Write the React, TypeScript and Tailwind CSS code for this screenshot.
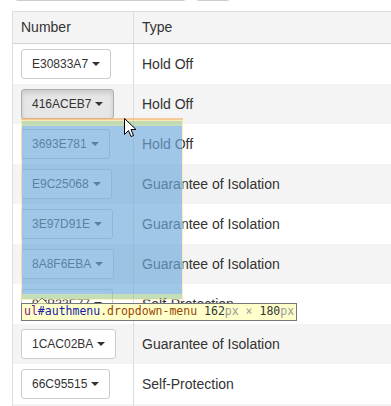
import React from "react";

type Row = { id: string; type: string; active?: boolean };

const rows: Row[] = [
  { id: "E30833A7", type: "Hold Off" },
  { id: "416ACEB7", type: "Hold Off", active: true },
  { id: "3693E781", type: "Hold Off" },
  { id: "E9C25068", type: "Guarantee of Isolation" },
  { id: "3E97D91E", type: "Guarantee of Isolation" },
  { id: "8A8F6EBA", type: "Guarantee of Isolation" },
  { id: "9CB33E77", type: "Self-Protection" },
  { id: "1CAC02BA", type: "Guarantee of Isolation" },
  { id: "66C95515", type: "Self-Protection" },
];

function IdButton({ id, active }: { id: string; active?: boolean }) {
  return (
    <button
      className={`inline-flex items-center h-[30px] pl-[10px] pr-[10px] rounded-[3px] border text-[12px] text-[#333] leading-[18px] ${
        active
          ? "bg-[#e6e6e6] border-[#adadad] shadow-[inset_0_3px_5px_rgba(0,0,0,0.125)]"
          : "bg-white border-[#ccc]"
      }`}
    >
      {id}
      <span className="ml-[4px] w-0 h-0 border-t-[4px] border-t-[#333] border-x-[4px] border-x-transparent" />
    </button>
  );
}

export default function App() {
  return (
    <div className="relative w-[391px] h-[406px] overflow-hidden bg-white font-['Liberation_Sans',Arial,sans-serif] text-[14px] text-[#333]">
      {/* bits of the toolbar scrolled off the top */}
      <div className="flex gap-[8px] pl-[14px] -mt-[29px] h-[30px]">
        <div className="w-[173px] h-[30px] rounded-[4px] border border-[#ccc] bg-white" />
        <div className="w-[36px] h-[30px] rounded-[4px] border border-[#ccc] bg-white" />
      </div>

      {/* table */}
      <div className="ml-[12px] mt-[10px] w-[440px] border-l border-t border-[#ddd]">
        <div className="flex h-[32px] bg-[#f4f4f4] border-b border-[#d3d3d3]">
          <div className="w-[121px] border-r border-[#ddd] pl-[8px] flex items-center">
            Number
          </div>
          <div className="pl-[8px] flex items-center">Type</div>
        </div>
        {rows.map((r, i) => (
          <div
            key={r.id}
            className={`flex h-[40px] ${i % 2 === 1 ? "bg-[#f4f4f4]" : "bg-white"}`}
          >
            <div className="w-[121px] border-r border-[#ddd] pl-[8px] flex items-center">
              <IdButton id={r.id} active={r.active} />
            </div>
            <div className="pl-[8px] flex items-center">{r.type}</div>
          </div>
        ))}
        {/* next row, only its top edge is in view */}
        <div className="flex h-[40px] bg-[#f4f4f4]">
          <div className="w-[121px] border-r border-[#ddd]" />
        </div>
      </div>

      {/* devtools highlight of the open dropdown */}
      <div className="absolute left-[21px] top-[118px] w-[162px] pointer-events-none">
        <div className="h-[2px] bg-[rgba(246,178,107,0.66)]" />
        <div className="h-[180px] border border-[rgba(255,229,153,0.66)]">
          <div className="h-full border-y-[5px] border-x-0 border-[rgba(147,196,125,0.55)] bg-[rgba(111,168,220,0.66)] bg-clip-padding" />
        </div>
      </div>

      {/* devtools tooltip */}
      <div className="absolute left-[21px] top-[303px] pointer-events-none">
        <svg
          className="absolute left-[15px] -top-[6px]"
          width="12"
          height="7"
          viewBox="0 0 12 7"
        >
          <path d="M0.5 6.5 L6 1 L11.5 6.5" fill="#ffffcc" stroke="#777" strokeWidth="1" />
        </svg>
        <div className="h-[18px] px-[2px] flex items-center border border-[#777] bg-[#ffffcc] font-['DejaVu_Sans_Mono',monospace] text-[11.5px] leading-none whitespace-nowrap">
          <span className="text-[#881280]">ul</span>
          <span className="text-[#1a1aa6]">#authmenu</span>
          <span className="text-[#994500]">.dropdown-menu</span>
          <span className="text-[#333]">&nbsp;162</span>
          <span className="text-[#999]">px</span>
          <span className="text-[#999]">&nbsp;×&nbsp;</span>
          <span className="text-[#333]">180</span>
          <span className="text-[#999]">px</span>
        </div>
      </div>

      {/* mouse pointer */}
      <svg
        className="absolute left-[124px] top-[118px] pointer-events-none"
        width="13"
        height="20"
        viewBox="0 0 13 20"
      >
        <path
          d="M0.5 0.5 L0.5 16.5 L4.5 12.5 L7 18.5 L9.5 17.5 L7 11.5 L12 11.5 Z"
          fill="#fff"
          stroke="#000"
          strokeWidth="1"
          strokeLinejoin="miter"
        />
      </svg>
    </div>
  );
}
